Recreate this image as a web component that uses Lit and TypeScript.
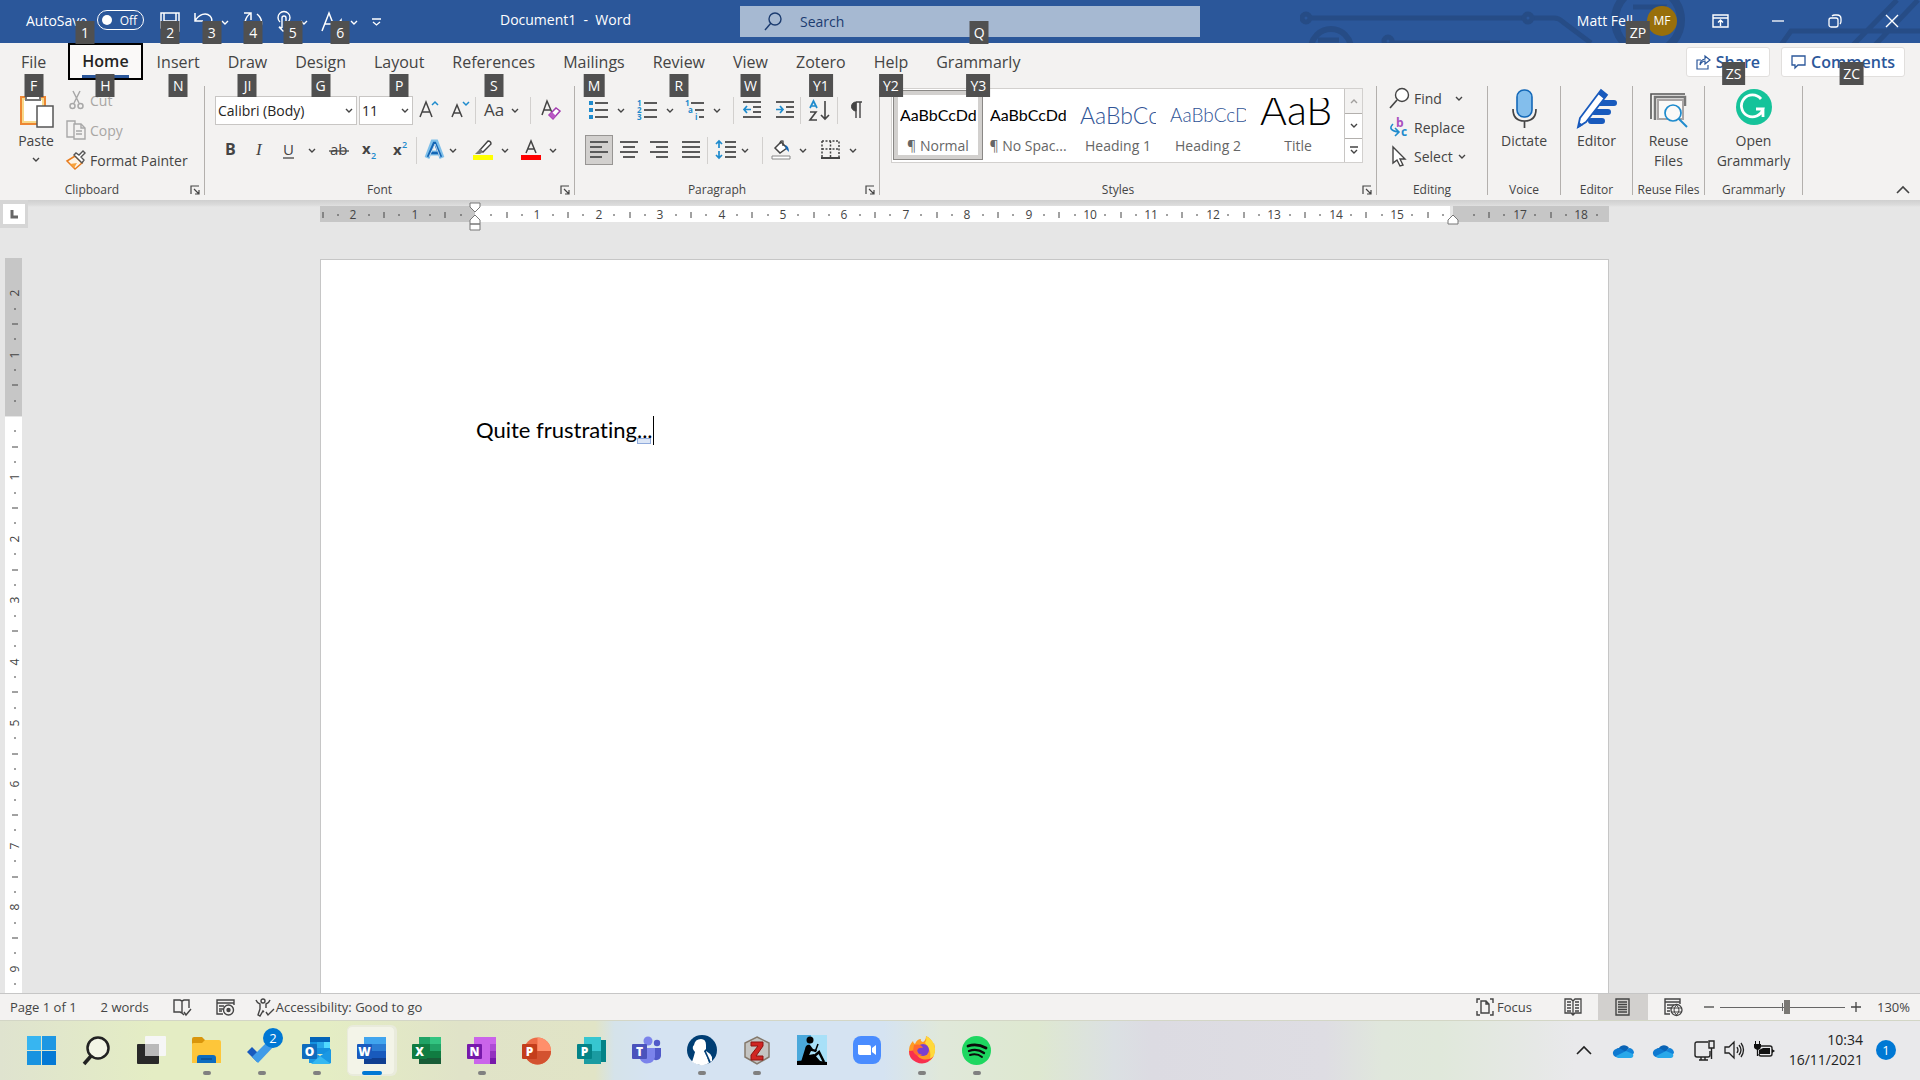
import { LitElement, html, css, svg, nothing, TemplateResult } from "lit";
import { customElement } from "lit/decorators.js";
import { classMap } from "lit/directives/class-map.js";
import { styleMap } from "lit/directives/style-map.js";

/* ---------- icon drawings ---------- */

const ink = "#444444";
const blue = "#1e8bcd";

const lines = (x: number, rows: [number, number, number][]) =>
  rows.map(([dx, y, w]) => svg`<path d="M${x + dx} ${y}h${w}" stroke="#5a5a5a" stroke-width="2"/>`);

const officeTile = (letter: string, dark: string) => svg`
  <rect x="0" y="8" width="15" height="15" rx="1" fill=${dark}/>
  <text x="7.5" y="20" text-anchor="middle" font-size="12" font-weight="800" fill="#fff">${letter}</text>`;

const cloud = svg`
  <path d="M5 5a6 6 0 0 1 10 0l-4 5H1a5 5 0 0 1 4-5z" fill="#0a63b5"/>
  <path d="M11 9l4-4a5 5 0 0 1 5 5l-3 3z" fill="#1282d8"/>
  <path d="M2 6a5 5 0 0 1 5 0l7 4-8 4H4A4 4 0 0 1 2 6z" fill="#0f79d0"/>
  <path d="M2 13l10-5 7 3a3 3 0 0 1-2 4H4a3 3 0 0 1-2-2z" fill="#28a8ea"/>`;

const icons: Record<string, TemplateResult> = {
  chevron: svg`<path d="M1 1l3 3 3-3" stroke=${ink} stroke-width="1.4"/>`,
  chevronUp: svg`<path d="M1 4l3-3 3 3" stroke="#a19f9d" stroke-width="1.4"/>`,
  more: svg`<path d="M0 1h8M1 4l3 3 3-3" stroke=${ink} stroke-width="1.4"/>`,
  moreLight: svg`<path d="M0 1h9M1 4l3.5 3 3.5-3" stroke="#fff" stroke-width="1.3"/>`,
  chevronLight: svg`<path d="M1 1l3 3 3-3" stroke="#fff" stroke-width="1.4"/>`,
  save: svg`<path d="M1 1h18v18H4l-3-3zM4 1v8h12V1M6 19v-6h8v6" stroke="#fff" stroke-width="1.5"/>`,
  undo: svg`<path d="M1 1v8h8M1 9C5 2 12 0 16 4c4 4 1 9-5 14" stroke="#fff" stroke-width="1.5"/>`,
  redo: svg`<path d="M1 1h7v7M8 1C2 5 0 12 5 18M14 2c6 5 6 12 1 17" stroke="#fff" stroke-width="1.5"/>`,
  touch: svg`<path d="M5 16V6a2 2 0 0 1 4 0v7l4 2v4H6l-4-4 3 1M3 10a6 6 0 1 1 8 0" stroke="#fff" stroke-width="1.4"/>`,
  pen: svg`<path d="M0 19L7 1l5 13M3 12h8M10 19l9-11v9" stroke="#fff" stroke-width="1.5"/>`,
  search: svg`<circle cx="11" cy="7" r="6" stroke="#1c3c70" stroke-width="1.4"/><path d="M7 11l-6 7" stroke="#1c3c70" stroke-width="1.4"/>`,
  ribbonMode: svg`<path d="M1 1h15v12H1zM1 4h15M8.5 12V6M6 8.5L8.5 6 11 8.5" stroke="#fff" stroke-width="1.4"/>`,
  minimize: svg`<path d="M1 7h12" stroke="#fff" stroke-width="1.3"/>`,
  restore: svg`<rect x="1" y="4" width="9" height="9" rx="2" stroke="#fff" stroke-width="1.3"/><path d="M4 2q1-1 3-1h2q4 0 4 4v2q0 2-1 3" stroke="#fff" stroke-width="1.3"/>`,
  close: svg`<path d="M1 1l12 12M13 1L1 13" stroke="#fff" stroke-width="1.4"/>`,
  share: svg`<path d="M5 5H1v9h11v-4M4 10q0-5 5-6V1l5 4-5 4V6Q6 6 4 10z" stroke="#2b579a" stroke-width="1.2"/>`,
  comment: svg`<path d="M1 1h13v9H7l-3 3v-3H1z" stroke="#2b579a" stroke-width="1.3"/>`,
  paste: svg`<path d="M2 3h24v27H2z" fill="#fff" stroke="#ed8733" stroke-width="2"/><path d="M4 5h20v23H4z" stroke="#f8d98a" stroke-width="2"/><path d="M7 0h14v6H7z" fill="#fff" stroke="#777" stroke-width="2"/><path d="M18 12h16v21H18z" fill="#fff" stroke="#555" stroke-width="1.5"/>`,
  cut: svg`<g stroke="#a8a8a8" stroke-width="1.5"><path d="M4 1l6 12M11 1L5 13"/><circle cx="3.5" cy="16" r="2.5"/><circle cx="11.5" cy="16" r="2.5"/></g>`,
  copy: svg`<g stroke="#a8a8a8" stroke-width="1.4"><path d="M8 17H1V1h8v3"/><path d="M8 4h7l4 4v11H8z" fill="#f3f2f1"/><path d="M15 4v4h4M10 11h6M10 14h6"/></g>`,
  painter: svg`<path d="M1 11l8 8 7-6-7-7z" fill="#fdf3e5" stroke="#e87d1e" stroke-width="1.5"/><path d="M4 14l7-1-3 5z" fill="#f7a23b"/><path d="M8 5l8 8 2-3-3-3 4-4-2-2-4 4-3-2z" fill="#fff" stroke="#555" stroke-width="1.4"/>`,
  grow: svg`<path d="M1 17L7 2l6 15M3 12h8" stroke=${ink} stroke-width="1.5"/><path d="M13 5l3-3 3 3" stroke=${blue} stroke-width="1.5"/>`,
  shrink: svg`<path d="M1 17L6 5l5 12M3 13h6" stroke=${ink} stroke-width="1.5"/><path d="M12 2l3 3 3-3" stroke=${blue} stroke-width="1.5"/>`,
  aa: svg`<text x="0" y="16" font-size="17" fill=${ink}>Aa</text>`,
  clear: svg`<path d="M1 15L6 1l6 14M3 10h7" stroke=${ink} stroke-width="1.5"/><path d="M8 15l7-7 4 3-7 8z" fill="#fff" stroke="#a33bb0" stroke-width="1.5"/><path d="M8 15l3-3 4 4-3 3z" fill="#b958c4"/>`,
  bold: svg`<text x="0" y="15" font-size="16" font-weight="700" fill=${ink}>B</text>`,
  italic: svg`<text x="1" y="15" font-size="17" font-style="italic" font-family="Liberation Serif" fill=${ink}>I</text>`,
  underline: svg`<text x="0" y="14" font-size="15" fill=${ink}>U</text><path d="M0 17h11" stroke=${ink} stroke-width="1.3"/>`,
  strike: svg`<text x="1" y="15" font-size="15" fill=${ink}>ab</text><path d="M0 11h20" stroke=${ink} stroke-width="1.3"/>`,
  sub: svg`<text x="0" y="14" font-size="15" font-weight="700" fill=${ink}>x</text><text x="9" y="19" font-size="9" font-weight="600" fill=${blue}>2</text>`,
  sup: svg`<text x="0" y="15" font-size="15" font-weight="700" fill=${ink}>x</text><text x="9" y="8" font-size="9" font-weight="600" fill=${blue}>2</text>`,
  effects: svg`<path d="M2 18L8 2h3l6 16M5 13h9" stroke="#7fc0ea" stroke-width="5"/><path d="M3 17L9 3h1l6 14M6 13h7" stroke="#1466b5" stroke-width="2.5"/><path d="M4 17L10 4l5 13" stroke="#fff" stroke-width="0.7"/>`,
  highlight: svg`<path d="M7 10l8-9q3 0 3 3l-8 8z" fill="#fff" stroke=${ink} stroke-width="1.4"/><path d="M2 14l5-5 3 3-3 2z" fill="#777"/><path d="M0 15h20v5H0z" fill="#ffff00"/>`,
  color: svg`<path d="M5 13L10 1l5 12M7 9h6" stroke=${ink} stroke-width="1.5"/><path d="M0 15h20v5H0z" fill="#ff0000"/>`,
  bullets: svg`<path d="M0 1h4v4H0zM0 8h4v4H0zM0 15h4v4H0z" fill=${blue}/>${lines(6, [[0, 3, 13], [0, 10, 13], [0, 17, 13]])}`,
  numbers: svg`<g font-size="8" font-weight="700" fill=${blue}><text x="0" y="6">1</text><text x="0" y="13">2</text><text x="0" y="20">3</text></g>${lines(7, [[0, 3, 13], [0, 10, 13], [0, 17, 13]])}`,
  multi: svg`<g font-size="8" font-weight="700" fill=${blue}><text x="0" y="6">1</text><text x="3" y="13">a</text><text x="10" y="20">i</text></g>${lines(6, [[0, 3, 13], [4, 10, 9], [8, 17, 5]])}`,
  outdent: svg`${lines(0, [[0, 2, 18], [10, 7, 8], [10, 12, 8], [0, 17, 18]])}<path d="M8 9.5H1M4 6L1 9.5 4 13" stroke=${blue} stroke-width="1.7"/>`,
  indent: svg`${lines(0, [[0, 2, 18], [10, 7, 8], [10, 12, 8], [0, 17, 18]])}<path d="M0 9.5h7M4 6l3 3.5L4 13" stroke=${blue} stroke-width="1.7"/>`,
  sort: svg`<path d="M1 8l3.5-7L8 8M2 6h5" stroke=${blue} stroke-width="1.7"/><path d="M1 12h6l-6 8h7M16 1v18M12 15l4 4 4-4" stroke=${ink} stroke-width="1.6"/>`,
  pilcrow: svg`<path d="M6 1h6M6 1v16M10 1v16" stroke=${ink} stroke-width="1.4"/><path d="M6 1a4 4 0 0 0 0 9z" fill=${ink} stroke=${ink}/>`,
  left: svg`${lines(0, [[0, 2, 18], [0, 7, 12], [0, 12, 18], [0, 17, 12]])}`,
  center: svg`${lines(0, [[0, 2, 18], [3, 7, 12], [0, 12, 18], [3, 17, 12]])}`,
  right: svg`${lines(0, [[0, 2, 18], [6, 7, 12], [0, 12, 18], [6, 17, 12]])}`,
  justify: svg`${lines(0, [[0, 2, 18], [0, 7, 18], [0, 12, 18], [0, 17, 18]])}`,
  spacing: svg`<path d="M3 8V1M0 4l3-3 3 3M3 11v7M0 15l3 3 3-3" stroke=${blue} stroke-width="1.7"/>${lines(9, [[0, 2, 11], [0, 7, 11], [0, 12, 11], [0, 17, 11]])}`,
  shading: svg`<path d="M4 8l6-6 6 6-7 5z" fill="#fff" stroke=${ink} stroke-width="1.5"/><path d="M9 4q0-4 3-3v5" stroke=${ink} stroke-width="1.3"/><path d="M14 5q4 1 4 7l-3-3z" fill="#1466b5"/><path d="M1 16h18v3H1z" fill="#fff" stroke="#888"/>`,
  borders: svg`<path d="M1 1h17v16M1 1v16M9.5 1v17M1 9h17" stroke=${ink} stroke-width="1.5" stroke-dasharray="2 1.5"/><path d="M0 18h19" stroke=${ink} stroke-width="2"/>`,
  launcher: svg`<path d="M1 9V1h8M4 4l5 5M9 5v4H5" stroke=${ink} stroke-width="1.2"/>`,
  find: svg`<circle cx="13" cy="7" r="6.5" fill="#fff" stroke=${ink} stroke-width="1.4"/><path d="M8 12l-7 8" stroke=${ink} stroke-width="1.6"/>`,
  replace: svg`<text x="7" y="10" font-size="12" font-weight="700" fill="#a94fbe">b</text><text x="12" y="19" font-size="12" font-weight="700" fill=${blue}>c</text><path d="M4 7q-6 6 5 8M6 11l4 4-4 4" stroke=${blue} stroke-width="1.6"/>`,
  select: svg`<path d="M2 1v16l4-3 3 6 3-1-3-6h5z" fill="#fff" stroke=${ink} stroke-width="1.4"/>`,
  mic: svg`<rect x="5" y="1" width="15" height="27" rx="7" fill="#83beec" stroke="#1368b8" stroke-width="1.6"/><path d="M1 20q0 12 11.5 12T24 20M12.5 32v7" stroke=${ink} stroke-width="1.7"/>`,
  editor: svg`<path d="M22 14h15M17 23h14M14 32h11" stroke="#185abd" stroke-width="6" stroke-linecap="round"/><path d="M3 29L24 1l6 5L9 33l-8 5z" fill="#fff" stroke="#185abd" stroke-width="1.8"/><path d="M24 1l6 5-3 4-6-5zM1 39l1-6 4 3z" fill="#185abd"/>`,
  reuse: svg`<path d="M1 30V5h34" stroke="#555" stroke-width="1.6"/><path d="M5 31V8h30v9" stroke="#777" stroke-width="2.5"/><path d="M8 11h25v19H8z" fill="#faf9f8" stroke="#a9a5a5" stroke-width="2"/><circle cx="23" cy="24" r="8" fill="#faf9f8" stroke=${blue} stroke-width="1.7"/><path d="M29 30l8 8" stroke=${blue} stroke-width="2"/>`,
  grammarly: svg`<circle cx="18" cy="18" r="18" fill="#15c39a"/><path d="M25 10a11 11 0 1 0 2 10h-7M27 20v8" stroke="#fff" stroke-width="2.8"/>`,
  collapse: svg`<path d="M1 7l6-6 6 6" stroke=${ink} stroke-width="1.6"/>`,
  proof: svg`<path d="M9 2v12l-2-1H1V1h6zM9 2l2-1h5v8M9 14l2 2M11 13l2 3 5-6" stroke=${ink} stroke-width="1.4"/>`,
  macro: svg`<path d="M7 15H1V1h17v5M1 4h17M3 7h5M3 10h4M3 12h3" stroke=${ink} stroke-width="1.4"/><circle cx="12.5" cy="11" r="5" stroke=${ink} stroke-width="1.4"/><circle cx="12.5" cy="11" r="2.2" fill=${ink}/>`,
  access: svg`<circle cx="8" cy="3" r="2" stroke=${ink} stroke-width="1.4"/><path d="M1 2q1 3 4 4v5l-2 6 2 1 3-5 1 1M15 2q-1 3-4 4v4M11 14l2 3 6-6" stroke=${ink} stroke-width="1.4"/>`,
  focus: svg`<path d="M4 1H1v4M14 1h3v4M4 17H1v-4M14 17h3v-4" stroke=${ink} stroke-width="1.4"/><path d="M5 3h5l3 3v9H5zM10 3v3h3" stroke=${ink} stroke-width="1.4"/>`,
  read: svg`<path d="M9 3L7 1H1v14h6l2 2 2-2h6V1h-6zM9 3v14M3 4h4M3 7h4M3 10h4M3 13h4M11 4h4M11 7h4M11 10h4M11 13h4" stroke=${ink} stroke-width="1.3"/>`,
  print: svg`<path d="M1 1h13v16H1zM3 4h9M3 6.5h9M3 9h9M3 11.5h9M3 14h9" stroke=${ink} stroke-width="1.4"/>`,
  web: svg`<path d="M6 16H1V1h15v5M1 4h15M3 7h7M3 10h4M3 13h3" stroke=${ink} stroke-width="1.4"/><circle cx="12.5" cy="12" r="5.5" fill="#f3f2f1" stroke=${ink} stroke-width="1.3"/><path d="M7 10h11M7 14h11M12.5 7q-5 5 0 10q5-5 0-10" stroke=${ink}/>`,
  minus: svg`<path d="M0 5h10" stroke=${ink} stroke-width="1.3"/>`,
  plus: svg`<path d="M0 5h10M5 0v10" stroke=${ink} stroke-width="1.3"/>`,

  /* taskbar */
  start: svg`<path d="M0 0h14v14H0z" fill="#37b5f1"/><path d="M15 0h14v14H15z" fill="#1e97e3"/><path d="M0 15h14v14H0z" fill="#1893e0"/><path d="M15 15h14v14H15z" fill="#0479d5"/>`,
  find2: svg`<circle cx="16" cy="12" r="10.5" fill="#f3f5e6" stroke="#222" stroke-width="2.5"/><path d="M9 20l-7 8" stroke="#222" stroke-width="3.5"/>`,
  tasks: svg`<rect x="0" y="8" width="22" height="20" rx="1" fill="#292929"/><rect x="8" y="0" width="21" height="20" rx="1" fill="#f6f6f6"/><path d="M8 8h14v12H8z" fill="#b9b9b9"/>`,
  files: svg`<path d="M0 3q0-2 2-2h8l3 3h14v8H0z" fill="#d9960c"/><path d="M0 8q0-1 2-1h8l3-3h14q2 0 2 2v21H0z" fill="#fdc63a"/><path d="M5 22q0-3 3-3h13q3 0 3 3v5H5z" fill="#0c6cc0"/><path d="M9 23h11" stroke="#0a3f78"/>`,
  todo: svg`<path d="M0 16l5-5 9 9-4 6z" fill="#185abd"/><path d="M5 21L23 3l6 5-18 19z" fill="#3f9be8"/>`,
  outlook: svg`<path d="M8 1h20v17H8z" fill="#1490df"/><path d="M8 1h20v5H8z" fill="#0364b8"/><path d="M15 6h7v6h-7z" fill="#28a8ea"/><path d="M22 6h6v6h-6z" fill="#50d9ff"/><path d="M7 13l11 7 11-7v14H7z" fill="#1a98e4"/><path d="M18 20l11 8H9z" fill="#35b8f1"/>${officeTile("O", "#0f6cbd")}`,
  word: svg`<path d="M7 1h22v7H7z" fill="#41a5ee"/><path d="M7 8h22v7H7z" fill="#2b7cd3"/><path d="M7 15h22v7H7z" fill="#185abd"/><path d="M7 22h22v6H7z" fill="#103f91"/>${officeTile("W", "#185abd")}`,
  excel: svg`<path d="M7 1h11v7H7z" fill="#21a366"/><path d="M18 1h11v7H18z" fill="#33c481"/><path d="M7 8h11v14H7z" fill="#107c41"/><path d="M18 8h11v7H18z" fill="#21a366"/><path d="M18 15h11v7H18z" fill="#107c41"/><path d="M7 22h22v6H7z" fill="#185c37"/>${officeTile("X", "#107c41")}`,
  onenote: svg`<path d="M7 1h16v27H7z" fill="#ca64ea"/><path d="M23 1h6v7h-6z" fill="#ca64ea"/><path d="M23 8h6v7h-6z" fill="#ae4bd5"/><path d="M23 15h6v7h-6z" fill="#9332bf"/><path d="M23 22h6v6h-6z" fill="#7719aa"/>${officeTile("N", "#7719aa")}`,
  powerpoint: svg`<circle cx="15.5" cy="15" r="13.5" fill="#ed6c47"/><path d="M15.5 1.5A13.5 13.5 0 0 1 29 15H15.5z" fill="#ff8f6b"/><path d="M2 15h27a13.5 13.5 0 0 1-27 0z" fill="#d35230"/>${officeTile("P", "#c43e1c")}`,
  publisher: svg`<path d="M18 4h11v22H18z" fill="#038387"/><path d="M7 1h17v14H7z" fill="#37c6d0"/><path d="M7 15h17v13H7z" fill="#1a9ba1"/>${officeTile("P", "#038387")}`,
  teams: svg`<circle cx="16" cy="5" r="4.5" fill="#7b83eb"/><circle cx="25" cy="7" r="3.2" fill="#5059c9"/><path d="M20 12h9v8a5 5 0 0 1-9 2z" fill="#5059c9"/><path d="M8 12h15v9a8 8 0 0 1-15 2z" fill="#7b83eb"/>${officeTile("T", "#4b53bc")}`,
  scholar: svg`<circle cx="15" cy="15" r="15" fill="#003e74"/><path d="M5 27q2-6 3-10-4-4-1-7 1-6 7-6 5 0 5 6l0 4-2 2q3 5 5 12-8 5-17-1z" fill="#fff"/><path d="M19 16q4 2 6 6l0 4-2 1-5-10z" fill="#fff"/><path d="M18 16l5 11" stroke="#003e74" stroke-width="1.5"/>`,
  zotero: svg`<path d="M13 1l12 6v14l-12 7-12-7V7z" fill="#c4c4c2" stroke="#85796c" stroke-width="1.5"/><path d="M7 6h12v4l-7 10h7v4H7v-5l7-9H7z" fill="#d02623" stroke="#8e1310"/>`,
  kindle: svg`<path d="M0 0h30v30H0z" fill="#4aa8db"/><path d="M14 0h16v28L12 24z" fill="#a8e0f8"/><circle cx="13" cy="5" r="3.5" fill="#000"/><path d="M4 27l4-13q1-5 5-4l3 4 4 1-1 2-5-1-2 4 5-1 7 8z" fill="#000"/><path d="M14 24l8-7 5 10" stroke="#000" stroke-width="2.5"/><path d="M18 17l3-8" stroke="#000" stroke-width="1.6"/><path d="M0 26q15-2 30 1v3H0z" fill="#000"/>`,
  zoom: svg`<rect width="28" height="28" rx="8" fill="#4a8cff"/><path d="M5 9h11q2 0 2 2v8H8q-3 0-3-2zM19 12l4-3v10l-4-3z" fill="#fff"/>`,
  firefox: svg`<path d="M1 15Q1 9 5 5q0 2 2 3 2-5 6-5-1 2 2 3 3-2 3-6 5 2 7 8l1-1q3 10-3 16-7 6-15 2-7-3-7-10z" fill="#ff9a22"/><path d="M18 0q8 4 9 12 1 7-5 13 2-12-5-18 2-3 1-7z" fill="#ffd93b"/><path d="M1 15q0 8 7 11 10 5 18-6-5 5-12 3-6-2-6-9-5 1-7 1z" fill="#f8304f"/><circle cx="15" cy="14" r="6" fill="#7a3fd0"/><path d="M6 9q7-2 9 3-5-1-6 3 1 4 6 3-7 4-10-3z" fill="#ff6a2f"/>`,
  spotify: svg`<circle cx="14.5" cy="14.5" r="14.5" fill="#1ed760"/><g stroke="#0b0b0b" stroke-linecap="round"><path d="M6 10q9-3 18 2" stroke-width="2.8"/><path d="M7 15q8-3 15 2" stroke-width="2.3"/><path d="M8 19q7-2 12 2" stroke-width="2"/></g>`,
  tray: svg`<path d="M1 9l7-7 7 7" stroke="#222" stroke-width="1.6"/>`,
  cloud,
  monitor: svg`<path d="M14 2H3Q1 2 1 4v11q0 2 2 2h11q2 0 2-2v-4M7 17v3M11 17v3M5 20h9" stroke="#222" stroke-width="1.4"/><path d="M15 1h5v7h-5zM17.5 8v11" stroke="#222" stroke-width="1.4"/>`,
  sound: svg`<path d="M1 6h4l5-5v16l-5-5H1zM13 6q2 3 0 6M15 4q4 5 0 10M17 2q5 7 0 14" stroke="#222" stroke-width="1.3"/>`,
  battery: svg`<path d="M7 5h9q2 0 2 2v6q0 2-2 2H7q-2 0-2-2" stroke="#222" stroke-width="1.4"/><path d="M9 7h7v6H5V9zM18 8l3 2-3 2zM0 3h7v3q0 2-3 3-4-1-4-3zM1 0h1v3H1zM5 0h1v3H5z" fill="#111"/><path d="M3.5 8v7" stroke="#111" stroke-width="1.3"/>`,
};

const icon = (name: string, w: number, h: number) => html`
  <svg class="icon" width=${w} height=${h} viewBox="0 0 ${w} ${h}" fill="none" aria-hidden="true">${icons[name]}</svg>`;

const chevron = () => icon("chevron", 8, 5);
const tip = (key?: string) => (key ? html`<span class="tip">${key}</span>` : nothing);

/* ---------- rulers ---------- */

const CM = 614 / 10;
const MARGIN = 156;

function marks(from: number, to: number, skip: number[]) {
  const out: { pos: number; q: number }[] = [];
  for (let q = from; q <= to; q++) if (!skip.includes(q)) out.push({ pos: Math.round(MARGIN + (q * CM) / 4), q });
  return out;
}

const sharedStyles = css`
  :host { box-sizing: border-box; flex: none; }
  * { box-sizing: border-box; }
  button, input, select { font: inherit; color: inherit; margin: 0; }
  button { border: 0; padding: 0; background: none; display: flex; align-items: center; justify-content: center; white-space: nowrap; position: relative; }
  svg { display: block; flex: none; overflow: visible; font-family: "Open Sans", "Noto Sans", sans-serif; }
  .tip {
    position: absolute; left: 50%; transform: translateX(-50%); z-index: 5;
    height: 23px; min-width: 19px; padding: 0 4px; background: #505050; color: #fff;
    font-size: 14px; line-height: 23px; font-weight: 400; text-align: center;
  }
`;

/* ---------- title bar ---------- */

@customElement("word-titlebar")
export class WordTitlebar extends LitElement {
  static styles = [sharedStyles, css`
    :host { display: grid; grid-template-columns: 37fr 23fr 36fr; height: 43px; background: #2b579a; color: #fff; position: relative; z-index: 3; font-size: 14px; }
    .art { position: absolute; right: 0; top: 0; overflow: hidden; }
    .quick { display: flex; align-items: center; padding: 0 0 3px 26px; position: relative; }
    .autosave { display: flex; align-items: center; gap: 10px; margin-right: 16px; position: relative; }
    .toggle { width: 47px; height: 20px; border: 1px solid #fff; border-radius: 10px; font-size: 12px; padding: 0 6px 0 4px; justify-content: space-between; }
    .toggle::before { content: ""; width: 10px; height: 10px; border-radius: 5px; background: #fff; }
    .autosave .tip { top: 11px; left: 59px; }
    .items { display: flex; align-items: center; gap: 14px; padding-top: 4px; }
    .item { height: 20px; gap: 8px; }
    .item .tip { top: 9px; }
    .title { position: absolute; left: 500px; top: 0; line-height: 40px; white-space: pre; }
    .search { position: relative; margin: 6px 0; height: 31px; background: #a6b9d2; display: flex; align-items: center; gap: 18px; padding-left: 24px; color: #1c3c70; }
    .search input { flex: 1; border: 0; background: none; outline: 0; height: 31px; padding: 0; }
    .search input::placeholder { color: #1c3c70; opacity: 1; }
    .search .tip { top: 15px; left: 52%; }
    .right { display: flex; justify-content: flex-end; align-items: center; position: relative; padding-bottom: 2px; }
    .user { gap: 14px; margin-right: 15px; }
    .avatar { width: 30px; height: 30px; border-radius: 15px; background: #986f0b; font-size: 12px; line-height: 30px; }
    .user .tip { top: 15px; left: 61px; }
    .win { width: 57px; height: 40px; }
  `];

  private quick = [
    { label: "Save", icon: "save", w: 20, tip: "2", more: false },
    { label: "Undo", icon: "undo", w: 19, tip: "3", more: true },
    { label: "Redo", icon: "redo", w: 20, tip: "4", more: false },
    { label: "Touch mode", icon: "touch", w: 15, tip: "5", more: true },
    { label: "Ink", icon: "pen", w: 20, tip: "6", more: true },
  ];

  render() {
    return html`
      <svg class="art" width="620" height="43" viewBox="0 0 620 43" fill="none" stroke="#264c86" stroke-width="5" aria-hidden="true">
        <circle cx="6" cy="18" r="4"/><path d="M12 18h210M234 18h20q5 0 9 4l28 21"/><circle cx="228" cy="18" r="4"/>
        <circle cx="31" cy="49" r="20" stroke-width="6"/><path d="M18 40h21"/>
        <circle cx="88" cy="41" r="4"/><path d="M94 43h116"/>
        <circle cx="348" cy="20" r="33" stroke-width="8"/><path d="M333 7h30l-9 16"/>
        <path d="M481 45l10-14h129M553 45L597 0M575 45L618 0"/>
      </svg>
      <div class="quick">
        <div class="autosave"><span id="as">AutoSave</span>
          <button class="toggle" role="switch" aria-checked="false" aria-labelledby="as">Off</button>${tip("1")}</div>
        <div class="items">
          ${this.quick.map((b) => html`<button class="item" aria-label=${b.label}>
            ${icon(b.icon, b.w, 20)}${b.more ? icon("chevronLight", 8, 5) : nothing}${tip(b.tip)}</button>`)}
          <button class="item" aria-label="Customise">${icon("moreLight", 9, 8)}</button>
        </div>
        <span class="title">Document1  -  Word</span>
      </div>
      <label class="search">${icon("search", 18, 19)}<input type="text" placeholder="Search" aria-label="Search">${tip("Q")}</label>
      <div class="right">
        <button class="user">Matt Fell<span class="avatar">MF</span>${tip("ZP")}</button>
        <button class="win" aria-label="Ribbon display options">${icon("ribbonMode", 17, 14)}</button>
        <button class="win" aria-label="Minimise">${icon("minimize", 14, 14)}</button>
        <button class="win" aria-label="Restore">${icon("restore", 14, 14)}</button>
        <button class="win" aria-label="Close">${icon("close", 14, 14)}</button>
      </div>`;
  }
}

/* ---------- tabs ---------- */

@customElement("word-tabs")
export class WordTabs extends LitElement {
  static styles = [sharedStyles, css`
    :host { display: flex; justify-content: space-between; height: 37px; background: #f3f2f1; color: #444; position: relative; z-index: 2; }
    nav { display: flex; padding-left: 7px; }
    .tab { padding: 0 14px; height: 37px; font-size: 16px; }
    .tab .tip { top: 31px; }
    .file { margin-right: 8px; }
    .active { border: 2px solid #000; padding: 0 12px; font-weight: 600; color: #252423; background: #faf9f8; }
    .active .name { height: 33px; line-height: 33px; border-bottom: 3px solid #2b579a; }
    .active .tip { top: 29px; }
    .actions { display: flex; gap: 11px; padding: 4px 15px 0 0; }
    .action { height: 30px; padding: 0 9px; gap: 5px; border: 1px solid #e1dfdd; border-radius: 3px; background: #fff; color: #2b579a; font-size: 16px; font-weight: 600; }
    .action .tip { top: 14px; left: 57%; }
  `];

  private tabs = [
    ["File", "F"], ["Home", "H"], ["Insert", "N"], ["Draw", "JI"], ["Design", "G"], ["Layout", "P"], ["References", "S"],
    ["Mailings", "M"], ["Review", "R"], ["View", "W"], ["Zotero", "Y1"], ["Help", "Y2"], ["Grammarly", "Y3"],
  ];

  render() {
    return html`
      <nav aria-label="Ribbon tabs">${this.tabs.map(([name, key]) => html`
        <button class=${classMap({ tab: true, file: name === "File", active: name === "Home" })}>
          <span class="name">${name}</span>${tip(key)}</button>`)}</nav>
      <div class="actions">
        <button class="action">${icon("share", 15, 15)}Share${tip("ZS")}</button>
        <button class="action">${icon("comment", 15, 14)}Comments${tip("ZC")}</button>
      </div>`;
  }
}

/* ---------- ribbon ---------- */

@customElement("word-ribbon")
export class WordRibbon extends LitElement {
  static styles = [sharedStyles, css`
    :host { display: flex; height: 120px; padding: 6px 0 5px; background: #f3f2f1; color: #444; font-size: 14px; }
    .group { position: relative; display: flex; flex-direction: column; border-right: 1px solid #b3b0ad; height: 109px; flex: none; }
    .body { flex: 1; display: flex; min-height: 0; }
    .caption { height: 10px; line-height: 10px; font-size: 12px; text-align: center; }
    .launch { position: absolute; right: 4px; bottom: 0; width: 10px; height: 10px; }
    .clipboard { width: 205px; } .font { width: 370px; } .paragraph { width: 305px; }
    .styles { flex: 1; min-width: 0; } .editing { width: 111px; } .single { width: 72px; }
    .voice { width: 73px; } .grammarly { width: 98px; }
    .inset { padding-right: 20px; }
    .clipboard .body { padding-left: 16px; gap: 10px; }
    .paste { flex-direction: column; width: 40px; justify-content: flex-start; padding-top: 8px; }
    .paste .word { line-height: 20px; margin: 3px 0 6px; }
    .stack { display: flex; flex-direction: column; align-items: flex-start; margin-top: -1px; }
    .stack button { height: 30px; gap: 4px; }
    .stack .slot { width: 20px; display: flex; justify-content: center; }
    .stack .off { color: #a8a6a4; }
    .rows { display: flex; flex-direction: column; gap: 10px; padding: 9px 0 0 10px; }
    .row { display: flex; align-items: center; height: 30px; }
    .row button { height: 30px; flex: none; }
    .sep { width: 1px; height: 27px; background: #d2d0ce; flex: none; }
    .pick { position: relative; display: flex; align-items: center; }
    .pick select { appearance: none; height: 29px; border: 1px solid #c8c6c4; border-radius: 0; background: #fff; padding: 0 0 0 2px; color: #252423; outline: 0; }
    .pick svg { position: absolute; right: 4px; pointer-events: none; }
    .family { width: 142px; } .size { width: 54px; }
    .pick + .pick { margin-left: 2px; }
    .w30 { width: 30px; } .w31 { width: 31px; } .w33 { width: 33px; } .w36 { width: 36px; } .w40 { width: 40px; }
    .w46 { width: 46px; } .w48 { width: 48px; } .w52 { width: 52px; } .w54 { width: 54px; }
    .row .drop { justify-content: flex-start; padding-left: 8px; gap: 8px; }
    .row .tight { padding-left: 4px; gap: 9px; }
    .row .near { gap: 5px; }
    .on { width: 28px; background: #d2d0ce; border: 1px solid #979593; }
    .gallery { flex: 1; display: flex; margin: 2px 13px 0 11px; height: 75px; border: 1px solid #d2d0ce; background: #fff; min-width: 0; }
    .cells { flex: 1; display: flex; padding: 1px; overflow: hidden; }
    .cell { width: 90px; height: 70px; flex: none; flex-direction: column; justify-content: flex-start; padding: 8px 7px 0; }
    .current { box-shadow: inset 0 0 0 1px #8a8886, inset 0 0 0 5px #d2d0ce; }
    .preview { width: 76px; height: 34px; overflow: hidden; text-align: left; color: #000; font: 400 16px/34px "Lato", "Open Sans", sans-serif; display: block; }
    .h1 { font-size: 23px; font-weight: 300; color: #2f5496; } .h2 { font-size: 19px; font-weight: 300; color: #2f5496; }
    .big { font-size: 41px; line-height: 24px; font-weight: 300; }
    .cell .style { color: #666; line-height: 28px; }
    .scroll { display: grid; grid-template-rows: 1fr 1fr 1fr; width: 18px; flex: none; border-left: 1px solid #c8c6c4; background: #f3f2f1; }
    .scroll button + button { border-top: 1px solid #b3b0ad; background: #fff; }
    .editing .body { padding-left: 12px; }
    .editing .stack { margin-top: -2px; }
    .editing .stack button { height: 29px; gap: 5px; }
    .editing .far { margin-left: 8px; }
    .large { flex: 1; flex-direction: column; justify-content: flex-start; padding-top: 3px; line-height: 20px; white-space: normal; }
    .large .pic { height: 42px; display: flex; align-items: flex-start; }
    .rest { width: 117px; flex: none; display: flex; justify-content: flex-end; align-items: flex-end; padding: 0 10px 0 0; }
  `];

  private btn(name: string, label: string, cls: string, w: number, h = 20, drop = false) {
    return html`<button class="${cls} ${drop ? "drop" : ""}" aria-label=${label}>${icon(name, w, h)}${drop ? chevron() : nothing}</button>`;
  }
  private launcher = () => html`<button class="launch" aria-label="Dialog launcher">${icon("launcher", 10, 10)}</button>`;
  private sep = () => html`<span class="sep"></span>`;
  private single(cls: string, caption: string, name: string, w: number, h: number, text: TemplateResult | string) {
    return html`<section class="group ${cls}"><div class="body"><button class="large"><span class="pic">${icon(name, w, h)}</span><span>${text}</span></button></div>
      <div class="caption">${caption}</div></section>`;
  }

  private samples = [
    ["AaBbCcDd", "¶ Normal", "current", ""], ["AaBbCcDd", "¶ No Spac...", "", ""],
    ["AaBbCc", "Heading 1", "", "h1"], ["AaBbCcD", "Heading 2", "", "h2"], ["AaB", "Title", "", "big"],
  ];

  render() {
    const s = this.sep;
    return html`
      <section class="group clipboard">
        <div class="body">
          <button class="paste">${icon("paste", 35, 34)}<span class="word">Paste</span>${chevron()}</button>
          <div class="stack">
            <button class="off" disabled><span class="slot">${icon("cut", 15, 20)}</span>Cut</button>
            <button class="off" disabled><span class="slot">${icon("copy", 20, 20)}</span>Copy</button>
            <button><span class="slot">${icon("painter", 20, 20)}</span>Format Painter</button>
          </div>
        </div>
        <div class="caption inset">Clipboard</div>${this.launcher()}
      </section>

      <section class="group font">
        <div class="body"><div class="rows">
          <div class="row">
            <label class="pick"><select class="family" aria-label="Font"><option>Calibri (Body)</option></select>${chevron()}</label>
            <label class="pick"><select class="size" aria-label="Font size"><option>11</option></select>${chevron()}</label>
            ${this.btn("grow", "Increase font size", "w31", 19)}${this.btn("shrink", "Decrease font size", "w31", 18)}${s()}
            ${this.btn("aa", "Change case", "w54 near", 22, 20, true)}${s()}${this.btn("clear", "Clear formatting", "w40", 20)}
          </div>
          <div class="row">
            ${this.btn("bold", "Bold", "w30", 11)}${this.btn("italic", "Italic", "w30", 10)}${this.btn("underline", "Underline", "w48", 17, 19, true)}
            ${this.btn("strike", "Strikethrough", "w31", 20)}${this.btn("sub", "Subscript", "w31", 15)}${this.btn("sup", "Superscript", "w31", 15)}${s()}
            ${this.btn("effects", "Text effects", "w48 near", 19, 20, true)}${this.btn("highlight", "Highlight colour", "w48", 20, 20, true)}${this.btn("color", "Font colour", "w48", 20, 20, true)}
          </div>
        </div></div>
        <div class="caption inset">Font</div>${this.launcher()}
      </section>

      <section class="group paragraph">
        <div class="body"><div class="rows">
          <div class="row">
            ${this.btn("bullets", "Bullets", "w48 tight", 19, 20, true)}${this.btn("numbers", "Numbering", "w48 tight", 20, 20, true)}${this.btn("multi", "Multilevel list", "w52 tight", 19, 20, true)}${s()}
            ${this.btn("outdent", "Decrease indent", "w36", 18)}${this.btn("indent", "Increase indent", "w30", 18)}${s()}
            ${this.btn("sort", "Sort", "w36", 21)}${s()}${this.btn("pilcrow", "Show marks", "w36", 13, 18)}
          </div>
          <div class="row">
            ${this.btn("left", "Align left", "on", 18)}${this.btn("center", "Centre", "w31", 18)}${this.btn("right", "Align right", "w30", 18)}${this.btn("justify", "Justify", "w33", 18)}${s()}
            ${this.btn("spacing", "Line spacing", "w54 near", 20, 20, true)}${s()}${this.btn("shading", "Shading", "w54", 20, 20, true)}${this.btn("borders", "Borders", "w46 tight", 19, 20, true)}
          </div>
        </div></div>
        <div class="caption inset">Paragraph</div>${this.launcher()}
      </section>

      <section class="group styles">
        <div class="body"><div class="gallery">
          <div class="cells">${this.samples.map(([t, n, c, p]) => html`
            <button class="cell ${c}"><span class="preview ${p}">${t}</span><span class="style">${n}</span></button>`)}</div>
          <div class="scroll">
            <button aria-label="Previous styles" disabled>${icon("chevronUp", 8, 5)}</button>
            <button aria-label="Next styles">${chevron()}</button>
            <button aria-label="More styles">${icon("more", 8, 8)}</button>
          </div>
        </div></div>
        <div class="caption inset">Styles</div>${this.launcher()}
      </section>

      <section class="group editing">
        <div class="body"><div class="stack">
          <button><span class="slot">${icon("find", 20, 21)}</span>Find<span class="far">${chevron()}</span></button>
          <button><span class="slot">${icon("replace", 20, 21)}</span>Replace</button>
          <button><span class="slot">${icon("select", 16, 21)}</span>Select${chevron()}</button>
        </div></div>
        <div class="caption">Editing</div>
      </section>
      ${this.single("voice", "Voice", "mic", 25, 40, "Dictate")}
      ${this.single("single", "Editor", "editor", 40, 40, "Editor")}
      ${this.single("single", "Reuse Files", "reuse", 38, 40, html`Reuse<br>Files`)}
      ${this.single("grammarly", "Grammarly", "grammarly", 36, 36, html`Open<br>Grammarly`)}
      <div class="rest"><button aria-label="Collapse ribbon">${icon("collapse", 14, 9)}</button></div>`;
  }
}

/* ---------- document area ---------- */

@customElement("word-workspace")
export class WordWorkspace extends LitElement {
  static styles = [sharedStyles, css`
    :host { display: flex; flex: 1; min-height: 0; overflow: hidden; background: linear-gradient(#cfcfcf, #dcdcdc 5px, #e6e6e6 7px); padding-right: 17px; }
    svg.ruler { flex: none; }
    .side { width: 26px; flex: none; display: flex; flex-direction: column; align-items: flex-start; }
    .tabstop { width: 28px; height: 28px; flex: none; background: #fff; border: solid #d6d6d6; border-width: 4px 3px; }
    .side .ruler { margin: 30px 0 0 5px; }
    .main { flex: 1; min-width: 0; display: flex; flex-direction: column; align-items: center; }
    .main .ruler { margin-top: 6px; }
    .page { width: 1289px; flex: 1; margin-top: 37px; background: #fff; border: 1px solid #c6c6c6; border-bottom: 0; padding: 152px 155px 0; }
    .text { font: 400 22px/36px "Lato", "Open Sans", sans-serif; font-variant-ligatures: none; color: #000; outline: 0; display: flex; align-items: center; }
    .flag { position: relative; }
    .flag::after { content: ""; position: absolute; left: 0; right: 2px; bottom: 4px; height: 4px; border: 1px solid #8faadc; background: #dce6f6; }
    .caret { width: 1px; height: 29px; background: #000; }
  `];

  render() {
    return html`
      <div class="side">
        <button class="tabstop" aria-label="Left tab">
          <svg width="9" height="10" viewBox="0 0 9 10" fill="none" aria-hidden="true"><path d="M2 1v7h6" stroke="#666" stroke-width="3"/></svg>
        </button>
        <svg class="ruler" width="17" height="1400" viewBox="0 0 17 1400" aria-hidden="true">
          <path d="M0 0h17v158H0z" fill="#c6c6c6"/><path d="M0 159h17v1241H0z" fill="#fff"/>
          ${marks(-8, 80, [0]).map(({ pos, q }) => {
            const y = pos + 2;
            return q % 4 === 0
              ? svg`<text transform="translate(14 ${y}) rotate(-90)" text-anchor="middle" font-size="12" fill="#444">${Math.abs(q / 4)}</text>`
              : q % 2 === 0 ? svg`<path d="M7 ${y}h6" stroke="#444"/>` : svg`<path d="M9 ${y}h2" stroke="#444"/>`;
          })}
        </svg>
      </div>
      <div class="main">
        <svg class="ruler" width="1289" height="16" viewBox="0 0 1289 16" fill="none" aria-hidden="true">
          <path d="M0 0h155v16H0zM1133 0h156v16h-156z" fill="#c6c6c6"/><path d="M155 0h975v16H155z" fill="#fff"/>
          ${marks(-10, 73, [0, 64]).map(({ pos, q }) =>
            q % 4 === 0
              ? svg`<text x=${pos} y="13" text-anchor="middle" font-size="12" fill="#444">${Math.abs(q / 4)}</text>`
              : q % 2 === 0 ? svg`<path d="M${pos} 6v6" stroke="#444"/>` : svg`<path d="M${pos} 8v2" stroke="#444"/>`)}
          <g fill="#fff" stroke="#777"><path d="M150 -3h10v4l-5 5-5-5zM150 18v-4l5-5 5 5v4zM150 18h10v6h-10zM1128 18v-4l5-5 5 5v4z"/></g>
        </svg>
        <div class="page">
          <div class="text" role="textbox" aria-label="Document" tabindex="0">Quite frustrating<span class="flag">...</span><span class="caret"></span></div>
        </div>
      </div>`;
  }
}

/* ---------- status bar ---------- */

@customElement("word-status")
export class WordStatus extends LitElement {
  static styles = [sharedStyles, css`
    :host { display: flex; justify-content: space-between; height: 27px; border-top: 1px solid #c6c6c6; background: #f3f2f1; color: #444; font-size: 13px; padding: 0 10px; }
    .side { display: flex; align-items: center; height: 26px; }
    .side button { height: 26px; }
    .counts { display: flex; gap: 24px; margin-right: 24px; }
    .glyphs { display: flex; gap: 24px; margin-right: 20px; }
    .check { gap: 2px; }
    .views { display: flex; margin: 0 6px 0 16px; }
    .view { width: 50px; }
    .web { padding-left: 1px; }
    .print { background: #d2d0ce; }
    .focus { gap: 3px; }
    .zoomer { display: flex; align-items: center; gap: 6px; margin-right: 16px; }
    input { appearance: none; width: 125px; height: 20px; outline: 0;
      background: linear-gradient(#666, #666) center / 100% 1px no-repeat, linear-gradient(#666, #666) center / 1px 8px no-repeat; }
    input::-webkit-slider-thumb { appearance: none; width: 6px; height: 14px; background: #7a7874; }
  `];

  render() {
    return html`
      <div class="side">
        <div class="counts"><button>Page 1 of 1</button><button>2 words</button></div>
        <div class="glyphs">
          <button aria-label="Proofing">${icon("proof", 19, 17)}</button>
          <button aria-label="Macros">${icon("macro", 19, 17)}</button>
        </div>
        <button class="check">${icon("access", 19, 18)}Accessibility: Good to go</button>
      </div>
      <div class="side">
        <button class="focus">${icon("focus", 18, 18)}Focus</button>
        <div class="views">
          <button class="view" aria-label="Read mode">${icon("read", 18, 18)}</button>
          <button class="view print" aria-label="Print layout">${icon("print", 15, 18)}</button>
          <button class="view web" aria-label="Web layout">${icon("web", 19, 18)}</button>
        </div>
        <div class="zoomer">
          <button aria-label="Zoom out">${icon("minus", 10, 10)}</button>
          <input type="range" min="0" max="100" value="54" aria-label="Zoom">
          <button aria-label="Zoom in">${icon("plus", 10, 10)}</button>
        </div>
        <button>130%</button>
      </div>`;
  }
}

/* ---------- taskbar ---------- */

@customElement("desktop-taskbar")
export class DesktopTaskbar extends LitElement {
  static styles = [sharedStyles, css`
    :host { display: flex; justify-content: space-between; height: 60px; border-top: 1px solid #d3d6c6; font-size: 14px; color: #222;
      background: linear-gradient(90deg, #dfe3cf, #e4edc4 8%, #e4edc4 17%, #e0e3c8 24%, #e1e4c6 31%, #d5e3ea 32%, #d5e3f2 34%, #d5e3f2 46%, #e0e8da 49%, #dee8d0 54%, #dbe0e3 58%, #dcdbe2 60%, #dedde3 69%, #e0e7dc 72%, #e0e8db 75%, #e6e8e6 80%, #e9e9eb 82%); }
    .apps { display: flex; padding-left: 14px; }
    .app { width: 55px; height: 59px; padding-bottom: 1px; }
    .app::after { content: ""; position: absolute; bottom: 5px; width: var(--bar); height: 4px; border-radius: 2px; background: #808080; }
    .word::before { content: ""; position: absolute; inset: 5px 4px 5px 3px; background: #f3f4e8; border: 1px solid #e9ebdc; border-radius: 5px; box-shadow: 1px 0 0 1px #e9ebdc; }
    .word svg { position: relative; }
    .word::after { background: #0078d4; z-index: 1; }
    .count { position: absolute; right: 6px; top: 7px; width: 20px; height: 20px; border-radius: 10px; background: #0078d4; color: #fff; font-size: 13px; line-height: 20px; }
    .tray { display: flex; align-items: center; padding: 0 24px 1px 0; }
    .expand { margin-right: 22px; }
    .clouds { display: flex; gap: 20px; margin-right: 20px; }
    .status { gap: 9px; margin-right: 14px; }
    .clock { flex-direction: column; align-items: flex-end; line-height: 20px; margin-right: 13px; }
    .notice { width: 20px; height: 20px; border-radius: 10px; background: #0078d4; color: #fff; font-size: 13px; }
  `];

  private apps: [string, string, number, number, number][] = [
    ["Start", "start", 29, 29, 0], ["Search", "find2", 29, 29, 0], ["Task view", "tasks", 29, 29, 0], ["File Explorer", "files", 29, 29, 8],
    ["To Do", "todo", 29, 29, 8], ["Outlook", "outlook", 29, 29, 8], ["Word", "word", 29, 29, 20], ["Excel", "excel", 29, 29, 0],
    ["OneNote", "onenote", 29, 29, 8], ["PowerPoint", "powerpoint", 29, 29, 0], ["Publisher", "publisher", 29, 29, 0], ["Teams", "teams", 29, 29, 0],
    ["Reader", "scholar", 30, 30, 8], ["Zotero", "zotero", 26, 29, 8], ["Kindle", "kindle", 30, 30, 0], ["Zoom", "zoom", 28, 28, 0],
    ["Firefox", "firefox", 28, 29, 8], ["Spotify", "spotify", 29, 29, 8],
  ];

  render() {
    return html`
      <div class="apps">${this.apps.map(([label, name, w, h, bar]) => html`
        <button class="app ${name}" aria-label=${label} style=${styleMap({ "--bar": `${bar}px` })}>
          ${icon(name, w, h)}${name === "todo" ? html`<span class="count">2</span>` : nothing}</button>`)}</div>
      <div class="tray">
        <button class="expand" aria-label="Show hidden icons">${icon("tray", 16, 11)}</button>
        <div class="clouds"><button aria-label="OneDrive">${icon("cloud", 20, 15)}</button><button aria-label="OneDrive work">${icon("cloud", 20, 15)}</button></div>
        <button class="status" aria-label="Network, sound, battery">${icon("monitor", 21, 21)}${icon("sound", 21, 18)}${icon("battery", 21, 18)}</button>
        <button class="clock"><span>10:34</span><span>16/11/2021</span></button>
        <button class="notice">1</button>
      </div>`;
  }
}

@customElement("app-root")
export class AppRoot extends LitElement {
  static styles = css`
    :host { display: flex; flex-direction: column; height: 100vh; overflow: hidden; font-family: "Open Sans", "Noto Sans", sans-serif; }
  `;
  render() {
    return html`
      <word-titlebar></word-titlebar>
      <word-tabs></word-tabs>
      <word-ribbon></word-ribbon>
      <word-workspace></word-workspace>
      <word-status></word-status>
      <desktop-taskbar></desktop-taskbar>`;
  }
}
